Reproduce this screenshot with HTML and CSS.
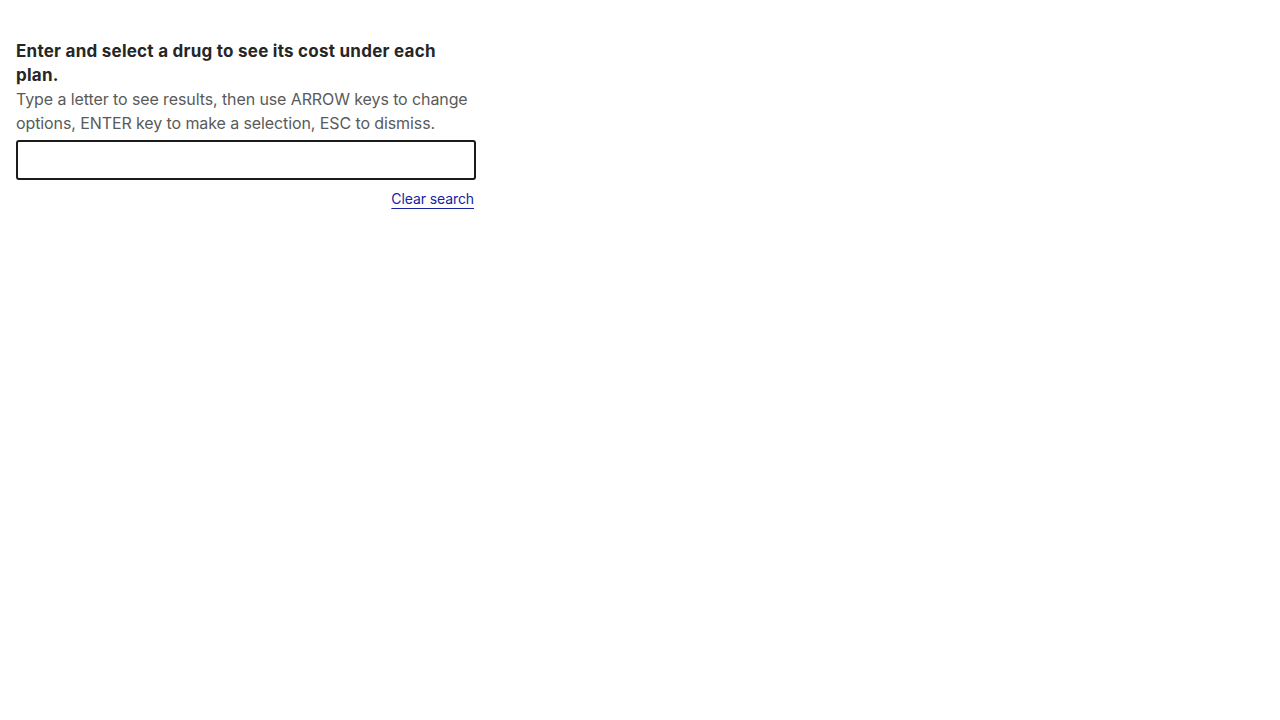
FILE: index.html
```html
<!DOCTYPE html>
<html lang="en">
<head>
<meta charset="utf-8">
<title>Drug search</title>
<link rel="stylesheet" href="styles.css">
</head>
<body>
<div class="search">
  <label class="label" for="drug">Enter and select a drug to see its cost under each plan.</label>
  <div class="hint">Type a letter to see results, then use ARROW keys to change options, ENTER key to make a selection, ESC to dismiss.</div>
  <input class="field" id="drug" type="text">
  <div class="actions"><a class="clear" href="#">Clear search</a></div>
</div>
</body>
</html>
```
FILE: styles.css
```css
html, body { margin: 0; padding: 0; background: #fff; }
body { font-family: Inter, "Liberation Sans", sans-serif; color: #262626; }
.search { width: 460px; margin: 39px 0 0 16px; display: flex; flex-direction: column; }
.label { font-size: 17px; font-weight: 700; line-height: 24px; letter-spacing: 0.25px; color: #262626; }
.hint { font-size: 16px; line-height: 24px; letter-spacing: -0.1px; color: #5a5a5a; }
.field { box-sizing: border-box; height: 40px; width: 460px; margin: 5px 0 0; border: 2px solid #1b1b1b; border-radius: 3px; padding: 0 8px; font-size: 16px; font-family: inherit; outline: none; }
.actions { display: flex; justify-content: flex-end; padding-right: 2px; margin-top: 9px; }
.clear { font-size: 14px; line-height: 20px; letter-spacing: -0.1px; color: #1523a0; text-decoration: underline; text-underline-offset: 4px; }
```
